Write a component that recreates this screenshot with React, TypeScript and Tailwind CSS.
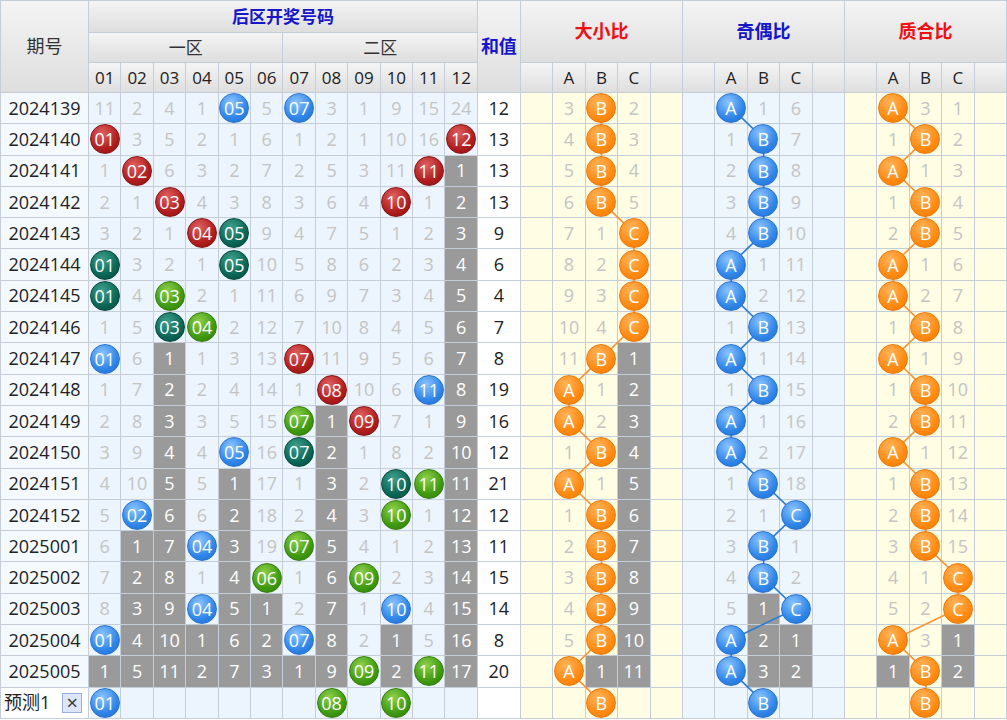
import React from "react";

const W = (1007 - 131) / 27;
const RH = 31.3;
const HEAD = 92;

const nums: [string, string, string][] = [
  ["2024139", "11 2 4 1 b05 5 b07 3 1 9 15 24", "12"],
  ["2024140", "r01 3 5 2 1 6 1 2 1 10 16 r12", "13"],
  ["2024141", "1 r02 6 3 2 7 2 5 3 11 r11 G1", "13"],
  ["2024142", "2 1 r03 4 3 8 3 6 4 r10 1 G2", "13"],
  ["2024143", "3 2 1 r04 t05 9 4 7 5 1 2 G3", "9"],
  ["2024144", "t01 3 2 1 t05 10 5 8 6 2 3 G4", "6"],
  ["2024145", "t01 4 g03 2 1 11 6 9 7 3 4 G5", "4"],
  ["2024146", "1 5 t03 g04 2 12 7 10 8 4 5 G6", "7"],
  ["2024147", "b01 6 G1 1 3 13 r07 11 9 5 6 G7", "8"],
  ["2024148", "1 7 G2 2 4 14 1 r08 10 6 b11 G8", "19"],
  ["2024149", "2 8 G3 3 5 15 g07 G1 r09 7 1 G9", "16"],
  ["2024150", "3 9 G4 4 b05 16 t07 G2 1 8 2 G10", "12"],
  ["2024151", "4 10 G5 5 G1 17 1 G3 2 t10 g11 G11", "21"],
  ["2024152", "5 b02 G6 6 G2 18 2 G4 3 g10 1 G12", "12"],
  ["2025001", "6 G1 G7 b04 G3 19 g07 G5 4 1 2 G13", "11"],
  ["2025002", "7 G2 G8 1 G4 g06 1 G6 g09 2 3 G14", "15"],
  ["2025003", "8 G3 G9 b04 G5 G1 2 G7 1 b10 4 G15", "14"],
  ["2025004", "b01 G4 G10 G1 G6 G2 b07 G8 2 G1 5 G16", "8"],
  ["2025005", "G1 G5 G11 G2 G7 G3 G1 G9 g09 G2 g11 G17", "20"],
];
const pred = "b01 _ _ _ _ _ _ g08 _ g10 _ _";

const dx = ["3 B 2","4 B 3","5 B 4","6 B 5","7 1 C","8 2 C","9 3 C","10 4 C","11 B G1","A 1 G2","A 2 G3","1 B G4","A 1 G5","1 B G6","2 B G7","3 B G8","4 B G9","5 B G10","A G1 G11","_ B _"];
const jo = ["A 1 6","1 B 7","2 B 8","3 B 9","4 B 10","A 1 11","A 2 12","1 B 13","A 1 14","1 B 15","A 1 16","A 2 17","1 B 18","2 1 C","3 B 1","4 B 2","5 G1 C","A G2 G1","A G3 G2","_ B _"];
const zh = ["A 3 1","1 B 2","A 1 3","1 B 4","2 B 5","A 1 6","A 2 7","1 B 8","A 1 9","1 B 10","2 B 11","A 1 12","1 B 13","2 B 14","3 B 15","4 1 C","5 2 C","A 3 G1","G1 B G2","_ B _"];

const ballBg: Record<string, string> = {
  r: "bg-[radial-gradient(circle_at_40%_30%,#e06060,#b01e1e_60%,#8a1010)] border-[#8a1414]",
  b: "bg-[radial-gradient(circle_at_40%_30%,#8cc4ff,#2f86e8_60%,#1e6ccc)] border-[#2a73d0]",
  g: "bg-[radial-gradient(circle_at_40%_30%,#8fd04a,#3f9a12_60%,#2f7d08)] border-[#357f0c]",
  t: "bg-[radial-gradient(circle_at_40%_30%,#3fa08c,#0b6656_60%,#06493e)] border-[#064a3e]",
  o: "bg-[radial-gradient(circle_at_40%_30%,#ffb45a,#ff8a12_60%,#f07800)] border-[#e87a10]",
};

function Ball({ c, t }: { c: string; t: string }) {
  return (
    <div className={`relative z-[2] w-[30px] h-[30px] shrink-0 rounded-full border flex items-center justify-center text-white text-[18px] leading-none ${ballBg[c]}`}>
      {t}
    </div>
  );
}

const cellB = "border-r border-b border-[#c5ced8] flex items-center justify-center";

function NumCell({ tok, bg }: { tok: string; bg: string }) {
  if (tok === "_") return <div className={`${cellB} ${bg}`} />;
  const c = tok[0];
  if (c === "G")
    return <div className={`${cellB} bg-[#9a9a9a] text-white text-[18px]`}>{tok.slice(1)}</div>;
  if ("rbgt".includes(c))
    return <div className={`${cellB} ${bg}`}><Ball c={c} t={tok.slice(1)} /></div>;
  return <div className={`${cellB} ${bg} text-[#c4c4c4] text-[18px]`}>{tok}</div>;
}

function RatioCell({ tok, bg, color }: { tok: string; bg: string; color: string }) {
  if (tok === "_") return <div className={`${cellB} ${bg}`} />;
  if (tok[0] === "G")
    return <div className={`${cellB} bg-[#9a9a9a] text-white text-[18px]`}>{tok.slice(1)}</div>;
  if ("ABC".includes(tok))
    return <div className={`${cellB} ${bg}`}><Ball c={color} t={tok} /></div>;
  return <div className={`${cellB} ${bg} text-[#c4c4c4] text-[18px]`}>{tok}</div>;
}

const hdr = "border-r border-b border-[#c5ced8] bg-[linear-gradient(#f4f4f4,#dedede)] flex items-center justify-center";

function linePts(data: string[], group: number) {
  const pts: [number, number][] = [];
  data.forEach((row, r) => {
    row.split(" ").forEach((t, i) => {
      if (t.length === 1 && "ABC".includes(t)) {
        const col = group * 5 + 1 + i;
        pts.push([131 + 12 * W + (col + 0.5) * W, HEAD + (r + 0.5) * RH]);
      }
    });
  });
  return pts.map((p) => p.join(",")).join(" ");
}

export default function App() {
  const groups = [
    { name: "大小比", color: "text-[#ee1111]", data: dx, bg: "bg-[#fffde3]", ball: "o", line: "#f5933a" },
    { name: "奇偶比", color: "text-[#1616c8]", data: jo, bg: "bg-[#edf5fd]", ball: "b", line: "#2a7ad6" },
    { name: "质合比", color: "text-[#ee1111]", data: zh, bg: "bg-[#fffde3]", ball: "o", line: "#f5933a" },
  ];
  return (
    <div
      className="relative w-[1007px] h-[720px] overflow-hidden bg-white text-[#222]"
      style={{ fontFamily: '"Open Sans","Noto Sans CJK SC",sans-serif' }}
    >
      <div className="grid grid-cols-[88px_repeat(12,1fr)_43px_repeat(15,1fr)] grid-rows-[32px_30px_30px_repeat(20,31.3px)] border-t border-l border-[#c5ced8]">
        <div className={`${hdr} row-span-3 text-[18px] text-[#333]`}>期号</div>
        <div className={`${hdr} col-span-12 text-[#1616c8] font-bold text-[17px]`}>后区开奖号码</div>
        <div className={`${hdr} row-span-3 text-[#1616c8] font-bold text-[18px]`}>和值</div>
        {groups.map((g) => (
          <div key={g.name} className={`${hdr} col-span-5 row-span-2 font-bold text-[18px] ${g.color}`}>{g.name}</div>
        ))}
        <div className={`${hdr} col-span-6 text-[17px] text-[#333]`}>一区</div>
        <div className={`${hdr} col-span-6 text-[17px] text-[#333]`}>二区</div>
        {Array.from({ length: 12 }, (_, i) => (
          <div key={i} className={`${hdr} text-[17px]`}>{String(i + 1).padStart(2, "0")}</div>
        ))}
        {groups.map((g) =>
          ["", "A", "B", "C", ""].map((l, i) => (
            <div key={g.name + i} className={`${hdr} text-[17px]`}>{l}</div>
          ))
        )}
        {nums.map(([id, row, sum], r) => (
          <React.Fragment key={id}>
            <div className={`${cellB} bg-[#f4f9fd] text-[18px]`}>{id}</div>
            {row.split(" ").map((t, i) => (
              <NumCell key={i} tok={t} bg="bg-[#ecf5fd]" />
            ))}
            <div className={`${cellB} bg-white text-[18px]`}>{sum}</div>
            {groups.map((g) => (
              <React.Fragment key={g.name}>
                <div className={`${cellB} ${g.bg}`} />
                {g.data[r].split(" ").map((t, i) => (
                  <RatioCell key={i} tok={t} bg={g.bg} color={g.ball} />
                ))}
                <div className={`${cellB} ${g.bg}`} />
              </React.Fragment>
            ))}
          </React.Fragment>
        ))}
        <div className={`${cellB} bg-white text-[18px] !justify-start pl-[3px] gap-[12px]`}>
          <span>预测1</span>
          <span className="w-[20px] h-[20px] border border-[#9ab0d8] bg-[#dde6f8] flex items-center justify-center text-[20px] leading-none text-[#333]">×</span>
        </div>
        {pred.split(" ").map((t, i) => (
          <NumCell key={i} tok={t} bg="bg-[#ecf5fd]" />
        ))}
        <div className={`${cellB} bg-white`} />
        {groups.map((g) => (
          <React.Fragment key={g.name}>
            <div className={`${cellB} ${g.bg}`} />
            {g.data[19].split(" ").map((t, i) => (
              <RatioCell key={i} tok={t} bg={g.bg} color={g.ball} />
            ))}
            <div className={`${cellB} ${g.bg}`} />
          </React.Fragment>
        ))}
      </div>
      <svg className="absolute left-0 top-0 z-[1] pointer-events-none" width="1007" height="720">
        {groups.map((g, gi) => (
          <polyline key={g.name} points={linePts(g.data, gi)} fill="none" stroke={g.line} strokeWidth="1.6" />
        ))}
      </svg>
    </div>
  );
}
